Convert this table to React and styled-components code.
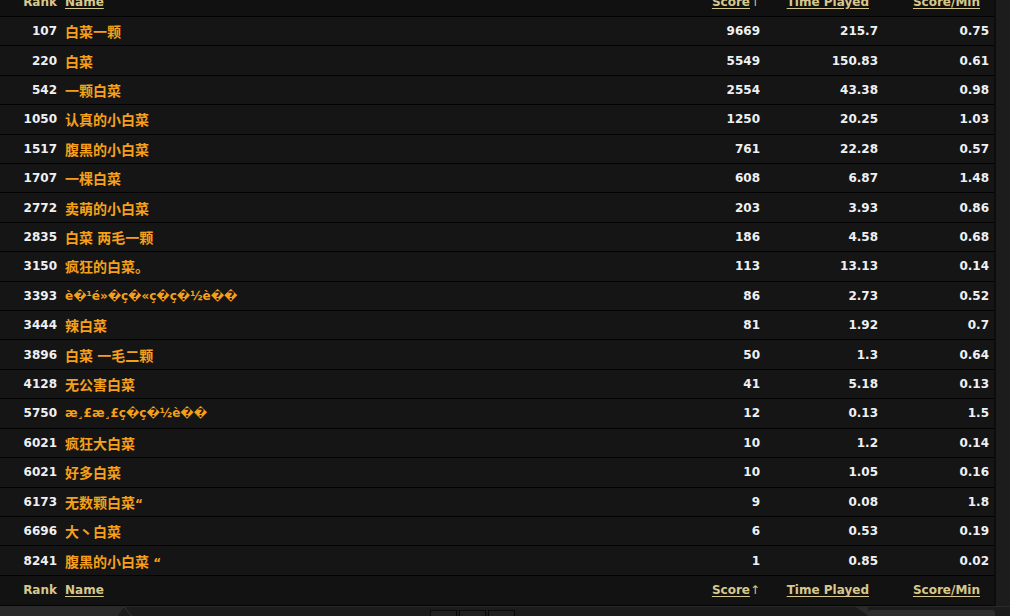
import styled, { createGlobalStyle } from "styled-components";

const GlobalStyle = createGlobalStyle`
  html, body {
    margin: 0;
    background: #1b1b1b;
    overflow: hidden;
  }
  body {
    font-family: "DejaVu Sans", "Noto Sans CJK SC", sans-serif;
    font-size: 12px;
    font-weight: bold;
  }
`;

const rows = [
  [107, "白菜一颗", 9669, "215.7", "0.75"],
  [220, "白菜", 5549, "150.83", "0.61"],
  [542, "一颗白菜", 2554, "43.38", "0.98"],
  [1050, "认真的小白菜", 1250, "20.25", "1.03"],
  [1517, "腹黑的小白菜", 761, "22.28", "0.57"],
  [1707, "一棵白菜", 608, "6.87", "1.48"],
  [2772, "卖萌的小白菜", 203, "3.93", "0.86"],
  [2835, "白菜 两毛一颗", 186, "4.58", "0.68"],
  [3150, "疯狂的白菜。", 113, "13.13", "0.14"],
  [3393, "è�¹é»�ç�«ç�ç�½è��", 86, "2.73", "0.52"],
  [3444, "辣白菜", 81, "1.92", "0.7"],
  [3896, "白菜 一毛二颗", 50, "1.3", "0.64"],
  [4128, "无公害白菜", 41, "5.18", "0.13"],
  [5750, "æ¸£æ¸£ç�ç�½è��", 12, "0.13", "1.5"],
  [6021, "疯狂大白菜", 10, "1.2", "0.14"],
  [6021, "好多白菜", 10, "1.05", "0.16"],
  [6173, "无数颗白菜“", 9, "0.08", "1.8"],
  [6696, "大丶白菜", 6, "0.53", "0.19"],
  [8241, "腹黑的小白菜 “", 1, "0.85", "0.02"],
];

const HAN = /([\u3000-\u303f\u4e00-\u9fff\uff00-\uffef]+)/;

function PlayerName({ text }) {
  return (
    <NameCell>
      {text.split(HAN).map((part, i) =>
        HAN.test(part) ? <Han key={i}>{part}</Han> : part
      )}
    </NameCell>
  );
}

function HeaderRow({ top }) {
  return (
    <Head $top={top}>
      <RankCell $head>Rank</RankCell>
      <HeadCell $left>
        <SortLink>Name</SortLink>
      </HeadCell>
      <HeadCell>
        <SortLink>Score</SortLink>
        <Arrow>↑</Arrow>
      </HeadCell>
      <HeadCell $spare>
        <SortLink>Time Played</SortLink>
      </HeadCell>
      <HeadCell $spare $last>
        <SortLink>Score/Min</SortLink>
      </HeadCell>
    </Head>
  );
}

export default function App() {
  return (
    <>
      <GlobalStyle />
      <Frame>
        <Body>
          <Board>
            <HeaderRow top />
            {rows.map(([rank, name, score, time, rate], i) => (
              <Row key={i}>
                <RankCell>{rank}</RankCell>
                <PlayerName text={name} />
                <NumCell>{score}</NumCell>
                <NumCell>{time}</NumCell>
                <NumCell $last>{rate}</NumCell>
              </Row>
            ))}
            <HeaderRow />
          </Board>
          <SideStrip />
        </Body>
        <BottomBar>
          <LeftTab />
          <Slash />
          <PagerGroup>
            <PagerBox />
            <PagerBox />
            <PagerBox />
          </PagerGroup>
          <RightSlant />
          <RightTab />
        </BottomBar>
      </Frame>
    </>
  );
}

const Frame = styled.div`
  height: 616px;
  display: flex;
  flex-direction: column;
  overflow: hidden;
`;

const Body = styled.div`
  display: flex;
`;

const Board = styled.div`
  width: 994px;
  margin-top: -13px;
  background: #151515;
`;

const SideStrip = styled.div`
  flex: 1;
  background: #1c1c1c;
  border-left: 2px solid #0c0c0c;
`;

const grid = `
  display: grid;
  grid-template-columns: 61px 1fr 100px 118px 112px;
  align-items: center;
  box-sizing: border-box;
  border-bottom: 1px solid #030303;
`;

const Row = styled.div`
  ${grid}
  height: 29.42px;
  background: #151515;
`;

const Head = styled.div`
  ${grid}
  height: 30px;
  background: ${(p) => (p.$top ? "#111111" : "#121212")};
`;

const RankCell = styled.div`
  text-align: right;
  padding-right: 4px;
  color: ${(p) => (p.$head ? "#d8c88c" : "#eef1f4")};
`;

const NameCell = styled.div`
  padding-left: 4px;
  color: #f5a01a;
  white-space: nowrap;
  overflow: hidden;
`;

const Han = styled.span`
  font-family: "Noto Sans CJK SC", sans-serif;
  font-size: 14px;
  font-weight: 700;
`;

const NumCell = styled.div`
  text-align: right;
  padding-right: ${(p) => (p.$last ? "5px" : "4px")};
  color: #eef1f4;
`;

const HeadCell = styled.div`
  text-align: ${(p) => (p.$left ? "left" : "right")};
  padding-left: ${(p) => (p.$left ? "4px" : "0")};
  padding-right: ${(p) =>
    p.$left ? "0" : `${(p.$last ? 5 : 4) + (p.$spare ? 9 : 0)}px`};
  color: #d8c88c;
`;

const SortLink = styled.span`
  text-decoration: underline;
  text-underline-offset: 2px;
  cursor: pointer;
`;

const Arrow = styled.span`
  font-weight: normal;
`;

const BottomBar = styled.div`
  flex: 1;
  display: flex;
  align-items: stretch;
  background: #1c1c1c;
  border-top: 1px solid #2a2a2a;
`;

const LeftTab = styled.div`
  width: 124px;
  background: #2a2a2a;
  clip-path: polygon(0 0, 100% 0, 95% 100%, 0 100%);
`;

const Slash = styled.div`
  width: 8px;
  background: linear-gradient(to top right, transparent 45%, #3a3a3a 50%, transparent 55%);
`;

const PagerGroup = styled.div`
  display: flex;
  gap: 2px;
  margin-left: 298px;
  padding-top: 3px;
`;

const PagerBox = styled.div`
  width: 25px;
  background: #202020;
  border: 1px solid #0a0a0a;
  border-bottom: none;
`;

const RightSlant = styled.div`
  width: 12px;
  margin-left: 341px;
  background: linear-gradient(to top right, #1c1c1c 48%, #2b2b2b 52%);
`;

const RightTab = styled.div`
  width: 127px;
  margin-top: 3px;
  background: #2e2e2e;
  border-radius: 3px 3px 0 0;
`;
